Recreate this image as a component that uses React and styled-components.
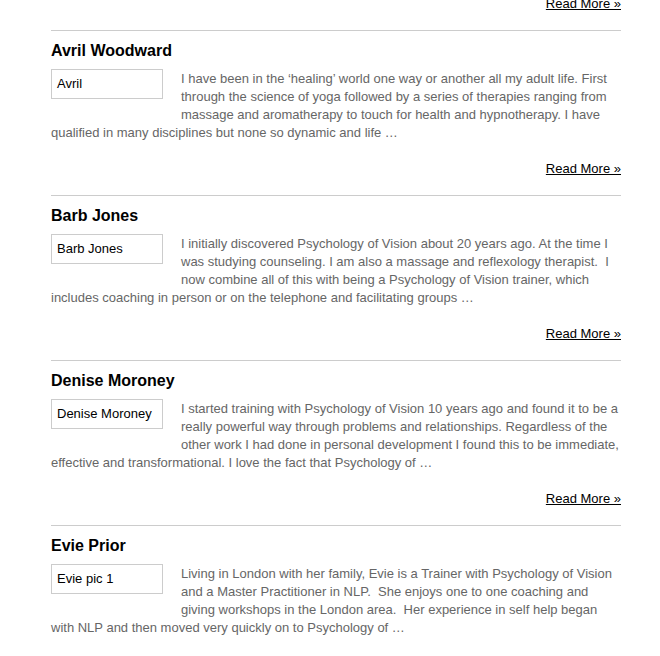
import styled, {createGlobalStyle} from "styled-components";

const people = [
  {
    name: "Avril Woodward",
    alt: "Avril",
    text: "I have been in the \u2018healing\u2019 world one way or another all my adult life. First through the science of yoga followed by a series of therapies ranging from massage and aromatherapy to touch for health and hypnotherapy. I have qualified in many disciplines but none so dynamic and life \u2026",
  },
  {
    name: "Barb Jones",
    alt: "Barb Jones",
    text: "I initially discovered Psychology of Vision about 20 years ago. At the time I was studying counseling. I am also a massage and reflexology therapist.\u00a0 I now combine all of this with being a Psychology of Vision trainer, which includes coaching in person or on the telephone and facilitating groups \u2026",
  },
  {
    name: "Denise Moroney",
    alt: "Denise Moroney",
    text: "I started training with Psychology of Vision 10 years ago and found it to be a really powerful way through problems and relationships. Regardless of the other work I had done in personal development I found this to be immediate, effective and transformational. I love the fact that Psychology of \u2026",
  },
  {
    name: "Evie Prior",
    alt: "Evie pic 1",
    text: "Living in London with her family, Evie is a Trainer with Psychology of Vision and a Master Practitioner in NLP.\u00a0 She enjoys one to one coaching and giving workshops in the London area.\u00a0 Her experience in self help began with NLP and then moved very quickly on to Psychology of \u2026",
  },
];

function App() {
  return (
    <>
      <GlobalStyle />
      <Container>
        <ReadMore href="#">Read More &raquo;</ReadMore>
        {people.map(p => (
          <Entry key={p.name}>
            <Name>{p.name}</Name>
            <Excerpt>
              <Photo>{p.alt}</Photo>
              {p.text}
            </Excerpt>
            <ReadMore href="#">Read More &raquo;</ReadMore>
          </Entry>
        ))}
      </Container>
    </>
  )
}

const GlobalStyle = createGlobalStyle`
  html, body {
    margin: 0;
    background: #fff;
    overflow: hidden;
  }
`;

const Container = styled.div`
  width: 570px;
  margin: -5px 0 0 51px;
  font-family: "Liberation Sans", Arial, sans-serif;
`;

const Entry = styled.div`
  border-top: 1px solid #ccc;
  margin-top: 17px;
  padding-top: 10px;
`;

const Name = styled.h2`
  margin: 0 0 8px;
  font-size: 16px;
  line-height: 20px;
  font-weight: 700;
  color: #000;
`;

const Excerpt = styled.div`
  padding-top: 1px;
  font-size: 13px;
  line-height: 18px;
  color: #666;

  &::after {
    content: "";
    display: block;
    clear: both;
  }
`;

const Photo = styled.span`
  float: left;
  box-sizing: border-box;
  width: 112px;
  height: 30px;
  margin: -1px 18px 10px 0;
  padding: 0 5px;
  border: 1px solid #ccc;
  font-size: 13px;
  line-height: 28px;
  color: #000;
  white-space: nowrap;
  overflow: hidden;
`;

const ReadMore = styled.a`
  display: block;
  margin-top: 18px;
  text-align: right;
  font-size: 13px;
  line-height: 18px;
  color: #000;
  text-decoration: underline;

  &:first-child {
    margin-top: 0;
  }
`;

export default App;
